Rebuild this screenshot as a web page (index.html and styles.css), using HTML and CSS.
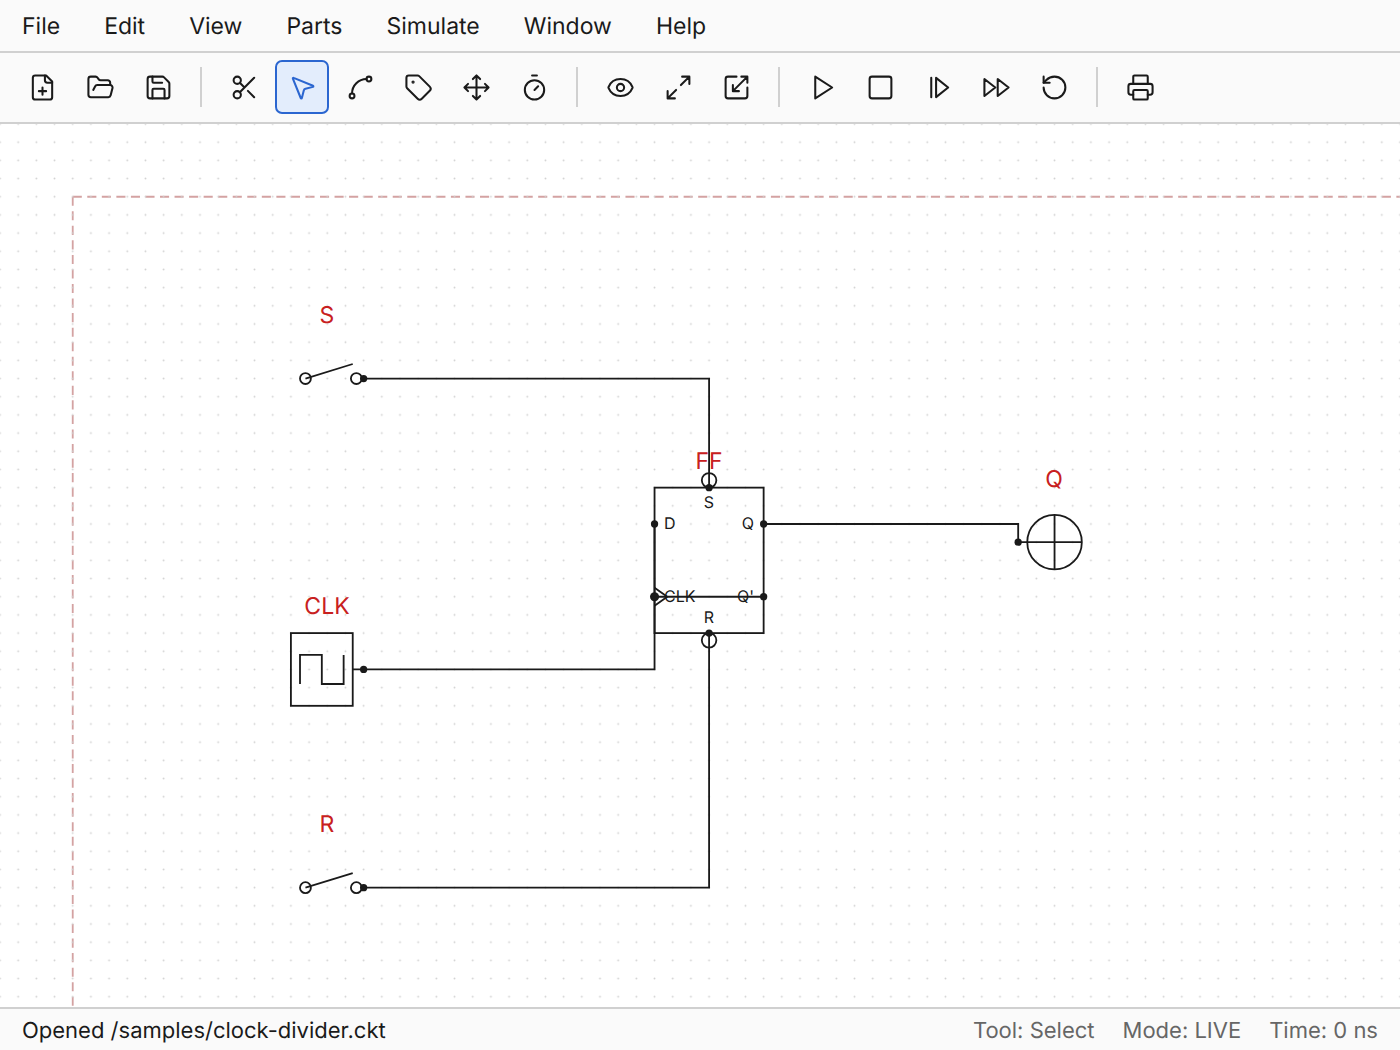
FILE: index.html
```html
<!DOCTYPE html>
<html lang="en">
<head>
<meta charset="utf-8">
<title>clock-divider.ckt</title>
<link rel="stylesheet" href="styles.css">
</head>
<body>
<div class="app">
  <nav class="menubar" aria-label="Main menu">
    <button class="menu" type="button">File</button>
    <button class="menu" type="button">Edit</button>
    <button class="menu" type="button">View</button>
    <button class="menu" type="button">Parts</button>
    <button class="menu" type="button">Simulate</button>
    <button class="menu" type="button">Window</button>
    <button class="menu" type="button">Help</button>
  </nav>

  <div class="toolbar" role="toolbar" aria-label="Tools">
    <button class="tool" type="button" aria-label="New"><svg class="icon" viewBox="0 0 24 24"><path d="M15 2H6a2 2 0 0 0-2 2v16a2 2 0 0 0 2 2h12a2 2 0 0 0 2-2V7Z"/><path d="M14 2v4a2 2 0 0 0 2 2h4M9 15h6M12 18v-6"/></svg></button>
    <button class="tool" type="button" aria-label="Open"><svg class="icon" viewBox="0 0 24 24"><path d="m6 14 1.5-2.9A2 2 0 0 1 9.24 10H20a2 2 0 0 1 1.94 2.5l-1.54 6a2 2 0 0 1-1.95 1.5H4a2 2 0 0 1-2-2V5a2 2 0 0 1 2-2h3.9a2 2 0 0 1 1.69.9l.81 1.2a2 2 0 0 0 1.67.9H18a2 2 0 0 1 2 2v2"/></svg></button>
    <button class="tool" type="button" aria-label="Save"><svg class="icon" viewBox="0 0 24 24"><path d="M15.2 3a2 2 0 0 1 1.4.6l3.8 3.8a2 2 0 0 1 .6 1.4V19a2 2 0 0 1-2 2H5a2 2 0 0 1-2-2V5a2 2 0 0 1 2-2z"/><path d="M17 21v-7a1 1 0 0 0-1-1H8a1 1 0 0 0-1 1v7M7 3v4a1 1 0 0 0 1 1h7"/></svg></button>
    <span class="separator"></span>
    <button class="tool" type="button" aria-label="Cut"><svg class="icon" viewBox="0 0 24 24"><circle cx="6" cy="6" r="3"/><path d="M8.12 8.12 12 12M20 4 8.12 15.88"/><circle cx="6" cy="18" r="3"/><path d="M14.8 14.8 20 20"/></svg></button>
    <button class="tool tool-active" type="button" aria-label="Select" aria-pressed="true"><svg class="icon" viewBox="0 0 24 24"><path d="M4.037 4.688a.495.495 0 0 1 .651-.651l16 6.5a.5.5 0 0 1-.063.947l-6.124 1.58a2 2 0 0 0-1.438 1.435l-1.579 6.126a.5.5 0 0 1-.947.063z"/></svg></button>
    <button class="tool" type="button" aria-label="Wire"><svg class="icon" viewBox="0 0 24 24"><circle cx="19" cy="5" r="2"/><circle cx="5" cy="19" r="2"/><path d="M5 17A12 12 0 0 1 17 5"/></svg></button>
    <button class="tool" type="button" aria-label="Label"><svg class="icon" viewBox="0 0 24 24"><path d="M12.586 2.586A2 2 0 0 0 11.172 2H4a2 2 0 0 0-2 2v7.172a2 2 0 0 0 .586 1.414l8.704 8.704a2.426 2.426 0 0 0 3.42 0l6.58-6.58a2.426 2.426 0 0 0 0-3.42z"/><circle cx="7.5" cy="7.5" r=".5" fill="currentColor"/></svg></button>
    <button class="tool" type="button" aria-label="Move"><svg class="icon" viewBox="0 0 24 24"><path d="M12 2v20M15 19l-3 3-3-3M19 9l3 3-3 3M2 12h20M5 9l-3 3 3 3M9 5l3-3 3 3"/></svg></button>
    <button class="tool" type="button" aria-label="Timing"><svg class="icon" viewBox="0 0 24 24"><path d="M10 2h4M12 14l3-3"/><circle cx="12" cy="14" r="8"/></svg></button>
    <span class="separator"></span>
    <button class="tool" type="button" aria-label="Show"><svg class="icon" viewBox="0 0 24 24"><path d="M2.062 12.348a1 1 0 0 1 0-.696 10.75 10.75 0 0 1 19.876 0 1 1 0 0 1 0 .696 10.75 10.75 0 0 1-19.876 0"/><circle cx="12" cy="12" r="3"/></svg></button>
    <button class="tool" type="button" aria-label="Zoom to fit"><svg class="icon" viewBox="0 0 24 24"><path d="M15 3h6v6M21 3l-7 7M3 21l7-7M9 21H3v-6"/></svg></button>
    <button class="tool" type="button" aria-label="Actual size"><svg class="icon" viewBox="0 0 24 24"><path d="M12 3H5a2 2 0 0 0-2 2v14a2 2 0 0 0 2 2h14a2 2 0 0 0 2-2v-7M14 15H9v-5M16 3h5v5M21 3 9 15"/></svg></button>
    <span class="separator"></span>
    <button class="tool" type="button" aria-label="Run"><svg class="icon" viewBox="0 0 24 24"><path d="M6 3l14 9-14 9z"/></svg></button>
    <button class="tool" type="button" aria-label="Stop"><svg class="icon" viewBox="0 0 24 24"><rect x="3" y="3" width="18" height="18" rx="2"/></svg></button>
    <button class="tool" type="button" aria-label="Step"><svg class="icon" viewBox="0 0 24 24"><path d="M6 4v16M10 4l10 8-10 8z"/></svg></button>
    <button class="tool" type="button" aria-label="Fast forward"><svg class="icon" viewBox="0 0 24 24"><path d="M13 19l9-7-9-7zM2 19l9-7-9-7z"/></svg></button>
    <button class="tool" type="button" aria-label="Reset"><svg class="icon" viewBox="0 0 24 24"><path d="M3 12a9 9 0 1 0 9-9 9.75 9.75 0 0 0-6.74 2.74L3 8"/><path d="M3 3v5h5"/></svg></button>
    <span class="separator"></span>
    <button class="tool" type="button" aria-label="Print"><svg class="icon" viewBox="0 0 24 24"><path d="M6 18H4a2 2 0 0 1-2-2v-5a2 2 0 0 1 2-2h16a2 2 0 0 1 2 2v5a2 2 0 0 1-2 2h-2M6 9V3a1 1 0 0 1 1-1h10a1 1 0 0 1 1 1v6"/><rect x="6" y="14" width="12" height="8" rx="1"/></svg></button>
  </div>

  <main class="canvas">
    <svg class="sheet" aria-label="Schematic">
      <defs>
        <pattern id="grid" width="10" height="10" patternUnits="userSpaceOnUse" patternTransform="scale(1.81818) translate(-5 -5)">
          <circle class="grid-dot" cx="5" cy="5" r="0.5"/>
        </pattern>
      </defs>
      <g class="page-edge" transform="scale(1.81818)">
        <path d="M40 40H2000"/>
        <path d="M40 40V2000"/>
      </g>
      <rect width="100%" height="100%" fill="url(#grid)"/>

      <!-- part names -->
      <g class="part-name">
        <text x="327" y="199">S</text>
        <text x="327" y="490">CLK</text>
        <text x="327" y="708">R</text>
        <text x="709" y="345">FF</text>
        <text x="1054" y="363">Q</text>
      </g>
      <g class="pin-name">
        <text x="709" y="384">S</text>
        <text x="709" y="499">R</text>
        <text class="pin-left" x="664" y="405">D</text>
        <text class="pin-left" x="664" y="478">CLK</text>
        <text class="pin-right" x="754" y="405">Q</text>
        <text class="pin-right" x="754" y="478">Q'</text>
      </g>

      <g class="ink" transform="scale(1.81818)">
        <!-- switches -->
        <circle cx="168" cy="140" r="3"/><circle cx="196" cy="140" r="3"/><path d="M168 140l26-8"/>
        <circle cx="168" cy="420" r="3"/><circle cx="196" cy="420" r="3"/><path d="M168 420l26-8"/>
        <!-- clock source -->
        <rect x="160" y="280" width="34" height="40"/>
        <path d="M165 308v-16h12v16h12v-16M194 300h6"/>
        <!-- flip-flop -->
        <rect x="360" y="200" width="60" height="80"/>
        <path d="M360 255l7 5-7 5"/>
        <circle cx="390" cy="196" r="4"/><circle cx="390" cy="284" r="4"/>
        <!-- lamp -->
        <circle cx="580" cy="230" r="15"/>
        <path d="M560 230h35M580 215v30"/>
        <!-- wires -->
        <path d="M200 140h190v60M200 420h190v-140M200 300h160v-40M420 260h-60v-40M420 220h140v10"/>
      </g>
      <g class="node" transform="scale(1.81818)">
        <circle cx="200" cy="140" r="2"/><circle cx="200" cy="300" r="2"/><circle cx="200" cy="420" r="2"/>
        <circle cx="390" cy="200" r="2"/><circle cx="390" cy="280" r="2"/>
        <circle cx="360" cy="220" r="2"/><circle cx="360" cy="260" r="2.5"/>
        <circle cx="420" cy="220" r="2"/><circle cx="420" cy="260" r="2"/><circle cx="560" cy="230" r="2"/>
      </g>
    </svg>
  </main>

  <footer class="statusbar">
    <span class="message">Opened /samples/clock-divider.ckt</span>
    <span>Tool: Select</span>
    <span>Mode: LIVE</span>
    <span>Time: 0 ns</span>
  </footer>
</div>
</body>
</html>
```
FILE: styles.css
```css
* { box-sizing: border-box; }

body {
  margin: 0;
  font-family: Inter, "Liberation Sans", sans-serif;
  text-rendering: geometricPrecision;
  color: #1a1a1a;
  background: #fff;
}

.app {
  display: flex;
  flex-direction: column;
  height: 100vh;
}

.menubar {
  display: flex;
  background: #fafafa;
  border-bottom: 2px solid #d0d0d0;
}

.menu {
  padding: 12px 22px 10px;
  border: 0;
  background: none;
  color: inherit;
  font: inherit;
  font-size: 23px;
  line-height: 29px;
  text-rendering: inherit;
}

.toolbar {
  display: flex;
  align-items: center;
  gap: 4px;
  padding: 7px 15px 8px;
  background: #fafafa;
  border-bottom: 2px solid #d0d0d0;
}

.tool {
  display: flex;
  align-items: center;
  justify-content: center;
  width: 54px;
  height: 54px;
  padding: 0;
  border: 2px solid transparent;
  border-radius: 7px;
  background: none;
  color: inherit;
}

.tool-active {
  border-color: #2b66d0;
  background: #e3edfc;
  color: #2b66d0;
}

.icon {
  width: 29px;
  height: 29px;
  flex: none;
  fill: none;
  stroke: currentColor;
  stroke-width: 1.7;
  stroke-linecap: round;
  stroke-linejoin: round;
}

.separator {
  width: 2px;
  height: 40px;
  margin: 0 11px;
  background: #d0d0d0;
}

.canvas {
  flex: 1;
  min-height: 0;
  overflow: hidden;
}

.sheet {
  display: block;
  width: 100%;
  height: 100%;
}

.grid-dot { fill: #d0d0d0; }

.page-edge {
  fill: none;
  stroke: #d4a2a2;
  stroke-dasharray: 5 3;
}

.ink {
  fill: none;
  stroke: #1a1a1a;
}

.node { fill: #1a1a1a; }

.part-name {
  fill: #c82020;
  font-size: 23px;
  text-anchor: middle;
}

.pin-name {
  fill: #1a1a1a;
  font-size: 16px;
  text-anchor: middle;
}

.pin-left { text-anchor: start; }
.pin-right { text-anchor: end; }

.statusbar {
  display: flex;
  gap: 28px;
  padding: 9px 22px 6px;
  border-top: 2px solid #d0d0d0;
  background: #fafafa;
  color: #666;
  font-size: 22px;
  line-height: 26px;
}

.message {
  flex: 1;
  color: #1a1a1a;
}
```
